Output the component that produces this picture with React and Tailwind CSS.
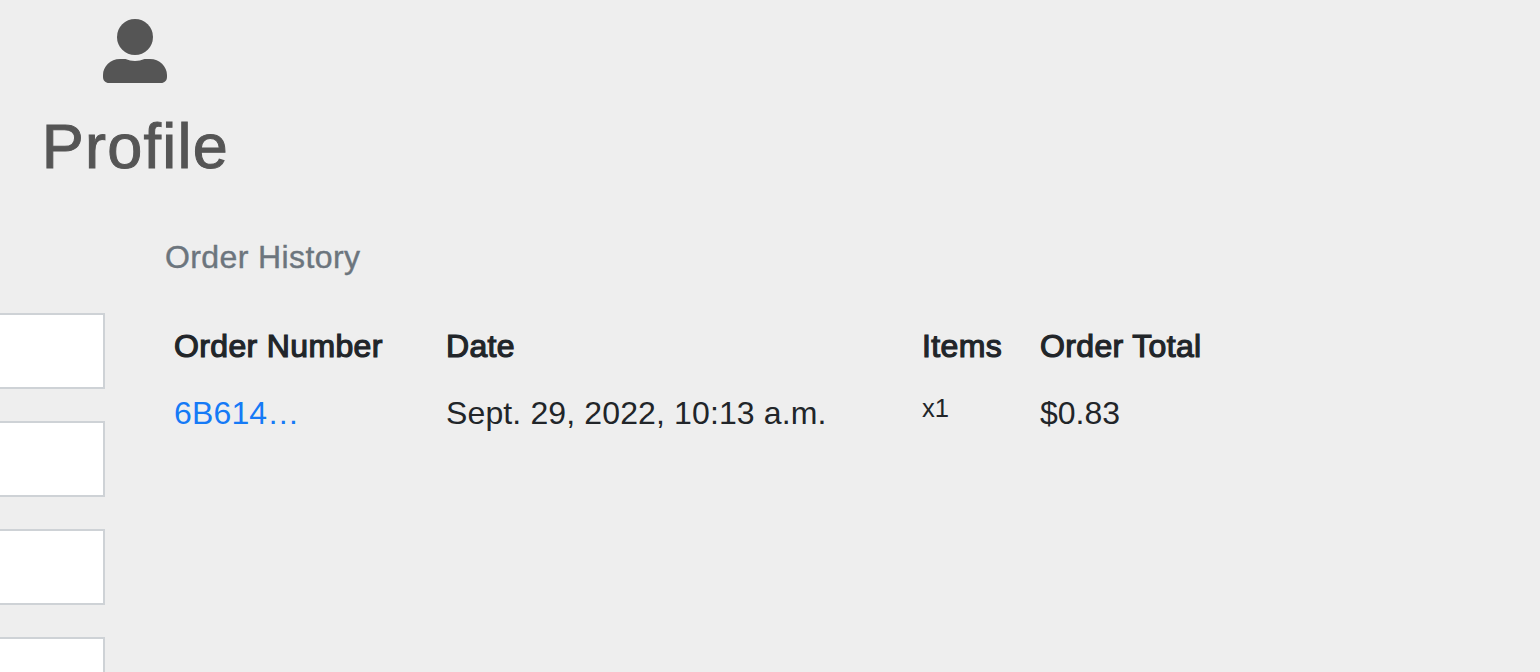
const fields = ['name', 'address', 'city', 'postcode'];

function UserIcon() {
  return (
    <svg className="size-16" viewBox="0 0 64 64" fill="#555555" aria-hidden="true">
      <circle cx="32" cy="18" r="18" />
      <path d="M17 40h5.500c3 1.300 6 2 9.500 2s6.500-.700 9.500-2H47c9.500 0 17 7.500 17 16v2c0 3.500-2.500 6-6 6H6c-3.500 0-6-2.500-6-6v-2c0-8.500 7.500-16 17-16z" />
    </svg>
  );
}

function HeaderCell({ children }) {
  return (
    <th className="pl-[9px] font-normal tracking-[0.35px] whitespace-nowrap [-webkit-text-stroke:1.2px_#212529]">
      {children}
    </th>
  );
}

export default function App() {
  return (
    <div className="flex h-[672px] w-full flex-col overflow-hidden bg-[#eeeeee] font-['Liberation_Sans',Arial,sans-serif] text-[#212529]">
      <header className="flex h-[241px] w-[271px] shrink-0 flex-col items-center pt-[19px] pr-px">
        <UserIcon />
        <h1 className="mt-[25px] pl-px text-[63px] leading-[77px] tracking-[1.25px] text-[#555555] [-webkit-text-stroke:1px_#555555]">Profile</h1>
      </header>
      <main className="flex items-start">
        <form className="flex w-[105px] shrink-0 flex-col gap-8 pt-[72px]">
          {fields.map((f) => (
            <input key={f} aria-label={f} className="-ml-1 h-[76px] w-[109px] shrink-0 border-2 border-[#ced2d6] bg-white" />
          ))}
        </form>
        <section className="ml-[60px]">
          <p className="text-[32px] leading-[32px] tracking-[0.4px] text-[#6c757d] [-webkit-text-stroke:0.4px_#6c757d]">Order History</p>
          <table className="mt-[49px] w-[1100px] table-fixed border-collapse text-left text-[32px] leading-[48px]">
            <colgroup>
              <col className="w-[272px]" />
              <col className="w-[476px]" />
              <col className="w-[118px]" />
              <col />
            </colgroup>
            <thead>
              <tr className="h-[67px] align-top">
                <HeaderCell>Order Number</HeaderCell>
                <HeaderCell>Date</HeaderCell>
                <HeaderCell>Items</HeaderCell>
                <HeaderCell>Order Total</HeaderCell>
              </tr>
            </thead>
            <tbody>
              <tr className="align-top">
                <td className="pl-[9px] tracking-[0.15px]"><a href="#" className="text-[#157af6]">6B614…</a></td>
                <td className="pl-[9px] tracking-[0.13px]">Sept. 29, 2022, 10:13 a.m.</td>
                <td className="pl-[9px] text-[25.600px] leading-[38px]">x1</td>
                <td className="pl-[9px]">$0.83</td>
              </tr>
            </tbody>
          </table>
        </section>
      </main>
    </div>
  );
}
